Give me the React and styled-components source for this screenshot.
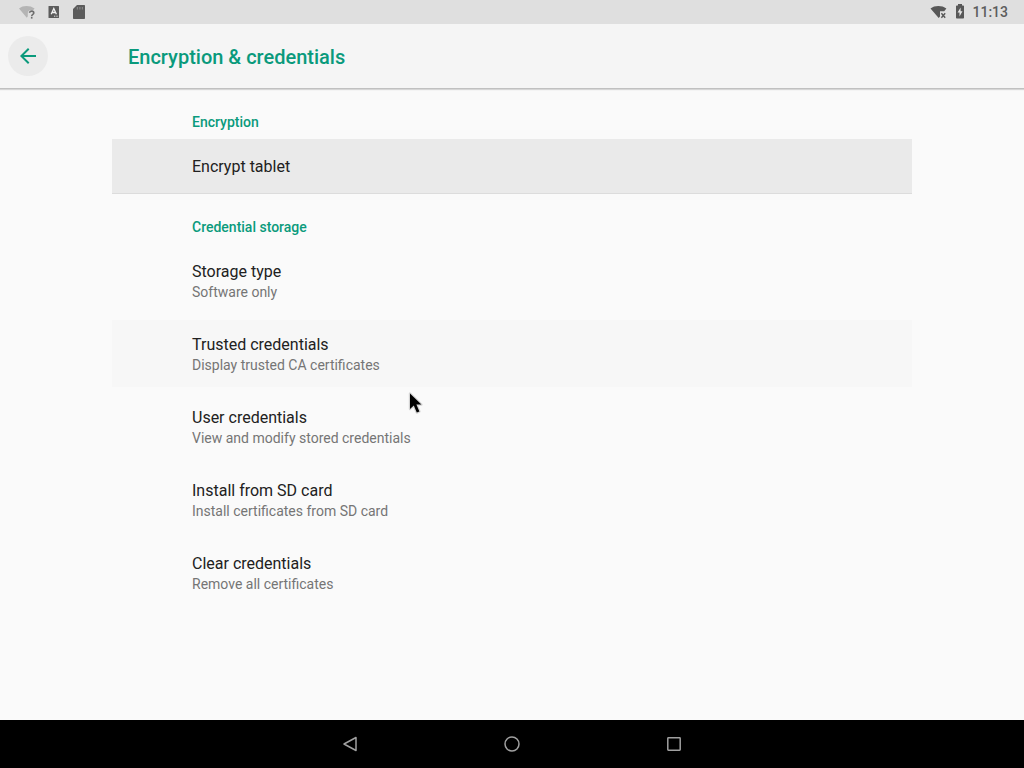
import React from 'react';
import styled, { createGlobalStyle } from 'styled-components';

const credentialItems = [
  { title: 'Storage type', summary: 'Software only' },
  { title: 'Trusted credentials', summary: 'Display trusted CA certificates', pressed: true },
  { title: 'User credentials', summary: 'View and modify stored credentials' },
  { title: 'Install from SD card', summary: 'Install certificates from SD card' },
  { title: 'Clear credentials', summary: 'Remove all certificates' },
];

const StatusBar = () => (
  <StatusHolder>
    <StatusGroup>
      <svg width="18" height="16" viewBox="0 0 18 16" aria-label="Wi-Fi unknown">
        <path d="M1 4.5C5 1.2 12 1.2 16.6 4.5L14.8 6.4C12 5.4 9.6 7 9.8 9.6L9.8 12.2L8.8 13.8Z" fill="#b4b4b4" />
        <path d="M11.6 8.8C11.6 6.6 15.8 6.6 15.8 8.9C15.8 10.4 13.7 10.5 13.7 12.2" fill="none" stroke="#6e6e6e" strokeWidth="1.6" />
        <rect x="12.9" y="13" width="1.6" height="1.6" fill="#6e6e6e" />
      </svg>
      <svg width="12" height="14" viewBox="0 0 12 14" aria-label="Keyboard">
        <rect x="0.5" y="1" width="10.5" height="12" rx="0.5" fill="#5c5c5c" />
        <path d="M3.2 9.3L5.8 3.6L8.4 9.3M4.2 7.5H7.4" fill="none" stroke="#f2f2f2" strokeWidth="1.3" />
        <path d="M6 11.2H7M7.7 11.2H8.7M9.3 11.2H10.1" stroke="#dedede" strokeWidth="1" />
      </svg>
      <svg width="14" height="16" viewBox="0 0 14 16" aria-label="SD card">
        <path d="M5 1H12C12.6 1 13 1.4 13 2V14C13 14.6 12.6 15 12 15H2C1.4 15 1 14.6 1 14V5Z" fill="#5c5c5c" />
        <path d="M5.4 3V5.4M7.9 3V5.4M10.4 3V5.4" stroke="#858585" strokeWidth="1.2" />
      </svg>
    </StatusGroup>
    <StatusGroup $tight>
      <svg width="18" height="16" viewBox="0 0 18 16" aria-label="Wi-Fi disconnected">
        <path d="M0.5 4.5C4.5 1.2 12 1.2 16.4 4.5L14.2 7.3H10V12.6L8.7 14Z" fill="#575757" />
        <path d="M11.4 9.3L15.2 13.7M15.2 9.3L11.4 13.7" stroke="#575757" strokeWidth="1.4" />
      </svg>
      <svg width="10" height="16" viewBox="0 0 10 16" aria-label="Battery charging">
        <path d="M3 0H7V1.5H8.2C8.7 1.5 9 1.8 9 2.3V13.7C9 14.2 8.7 14.5 8.2 14.5H1.8C1.3 14.5 1 14.2 1 13.7V2.3C1 1.8 1.3 1.5 1.8 1.5H3Z" fill="#575757" />
        <path d="M5.6 3.5L2.6 8.5H4.5V12.5L7.5 7.3H5.6Z" fill="#e6e6e6" />
      </svg>
      <Clock>11:13</Clock>
    </StatusGroup>
  </StatusHolder>
);

const App = () => (
  <Page>
    <GlobalStyle />
    <StatusBar />
    <Toolbar>
      <BackButton type="button" aria-label="Navigate up">
        <svg width="24" height="24" viewBox="0 0 24 24">
          <path d="M20 11H7.83l5.59-5.59L12 4l-8 8 8 8 1.41-1.41L7.83 13H20z" fill="#0a9a7c" />
        </svg>
      </BackButton>
      <ToolbarTitle>Encryption &amp; credentials</ToolbarTitle>
    </Toolbar>

    <Content>
      <CategoryHeader>Encryption</CategoryHeader>
      <EncryptItem type="button">
        <ItemTitle>Encrypt tablet</ItemTitle>
      </EncryptItem>

      <CategoryHeader>Credential storage</CategoryHeader>
      <ItemList>
        {credentialItems.map(item => (
          <li key={item.title}>
            <Item type="button" $pressed={item.pressed}>
              <ItemTitle>{item.title}</ItemTitle>
              <ItemSummary>{item.summary}</ItemSummary>
            </Item>
          </li>
        ))}
      </ItemList>
    </Content>

    <NavBar>
      <NavButton type="button" aria-label="Back">
        <svg width="18" height="18" viewBox="0 0 18 18">
          <path d="M15 2.5V15.5L3 9Z" fill="none" stroke="#a0a0a0" strokeWidth="1.5" strokeLinejoin="round" />
        </svg>
      </NavButton>
      <NavButton type="button" aria-label="Home">
        <svg width="18" height="18" viewBox="0 0 18 18">
          <circle cx="9" cy="9" r="7" fill="none" stroke="#a0a0a0" strokeWidth="1.5" />
        </svg>
      </NavButton>
      <NavButton type="button" aria-label="Overview">
        <svg width="18" height="18" viewBox="0 0 18 18">
          <rect x="2.8" y="2.8" width="12.4" height="12.4" rx="0.6" fill="none" stroke="#a0a0a0" strokeWidth="1.5" />
        </svg>
      </NavButton>
    </NavBar>

    <Pointer width="18" height="26" viewBox="0 0 18 26" aria-hidden="true">
      <path d="M2 2.5V18L5.8 14.6L8.8 21.6L11.4 20.4L8.4 13.6H13.4Z" fill="#000" stroke="#d4d4d4" strokeWidth="2.4" strokeLinejoin="round" paintOrder="stroke" />
    </Pointer>
  </Page>
);

export default App;


const GlobalStyle = createGlobalStyle`
  * {
    box-sizing: border-box;
  }

  body {
    margin: 0;
    font-family: Roboto, sans-serif;
    background-color: #fafafa;
  }

  button {
    border: 0;
    padding: 0;
    background: none;
    font-family: inherit;
    cursor: pointer;
  }

  svg {
    display: block;
  }
`;

const Page = styled.div`
  min-height: 100vh;

  display: flex;
  flex-direction: column;
`;

const StatusHolder = styled.div`
  height: 24px;
  padding: 0 16px 0 18px;

  display: flex;
  align-items: center;
  justify-content: space-between;

  background-color: #dfdfdf;
`;

const StatusGroup = styled.div`
  display: flex;
  align-items: center;
  gap: ${props => props.$tight ? '7px' : '12px'};
`;

const Clock = styled.span`
  font-size: 14px;
  font-weight: 500;
  line-height: 24px;

  color: #5c5c5c;
`;

const Toolbar = styled.header`
  height: 65px;
  padding: 0 8px;

  display: flex;
  align-items: center;
  gap: 80px;

  background-color: #f5f5f5;
  border-bottom: 1px solid #c0c0c0;
  box-shadow: 0 1px 1px rgba(0, 0, 0, 0.14);
`;

const BackButton = styled.button`
  height: 40px;
  width: 40px;

  display: flex;
  align-items: center;
  justify-content: center;

  border-radius: 50%;
  background-color: #ebebeb;
`;

const ToolbarTitle = styled.h1`
  margin: 0;
  padding-top: 2px;

  font-size: 20px;
  font-weight: 500;
  line-height: 24px;

  color: #0a9a7c;
`;

const Content = styled.main`
  width: 100%;
  max-width: 800px;
  margin: 0 auto;

  flex: 1;
`;

const CategoryHeader = styled.h2`
  margin: 0;
  padding: 24px 16px 8px 80px;

  font-size: 14px;
  font-weight: 500;
  line-height: 18px;

  color: #0a9a7c;
`;

const ItemList = styled.ul`
  margin: 0;
  padding: 3px 0;

  display: flex;
  flex-direction: column;
  gap: 6px;

  list-style: none;
`;

const Item = styled.button`
  width: 100%;

  && {
    padding: 14px 16px 13px 80px;
    background-color: ${props => props.$pressed ? '#f7f7f7' : 'transparent'};
  }

  display: block;
  text-align: left;
`;

const EncryptItem = styled.button`
  width: 100%;

  && {
    padding: 17px 16px 15px 80px;
    background-color: #eaeaea;
    border-bottom: 1px solid #dcdcdc;
  }

  display: block;
  text-align: left;
`;

const ItemTitle = styled.span`
  display: block;

  font-size: 16px;
  line-height: 22px;

  color: #212121;
`;

const ItemSummary = styled.span`
  display: block;

  font-size: 14px;
  line-height: 18px;

  color: #757575;
`;

const NavBar = styled.nav`
  height: 48px;

  display: flex;
  justify-content: center;

  background-color: #000;
`;

const NavButton = styled.button`
  width: 162px;

  display: flex;
  align-items: center;
  justify-content: center;
`;

const Pointer = styled.svg`
  position: fixed;
  left: 408px;
  top: 391px;

  pointer-events: none;
`;
